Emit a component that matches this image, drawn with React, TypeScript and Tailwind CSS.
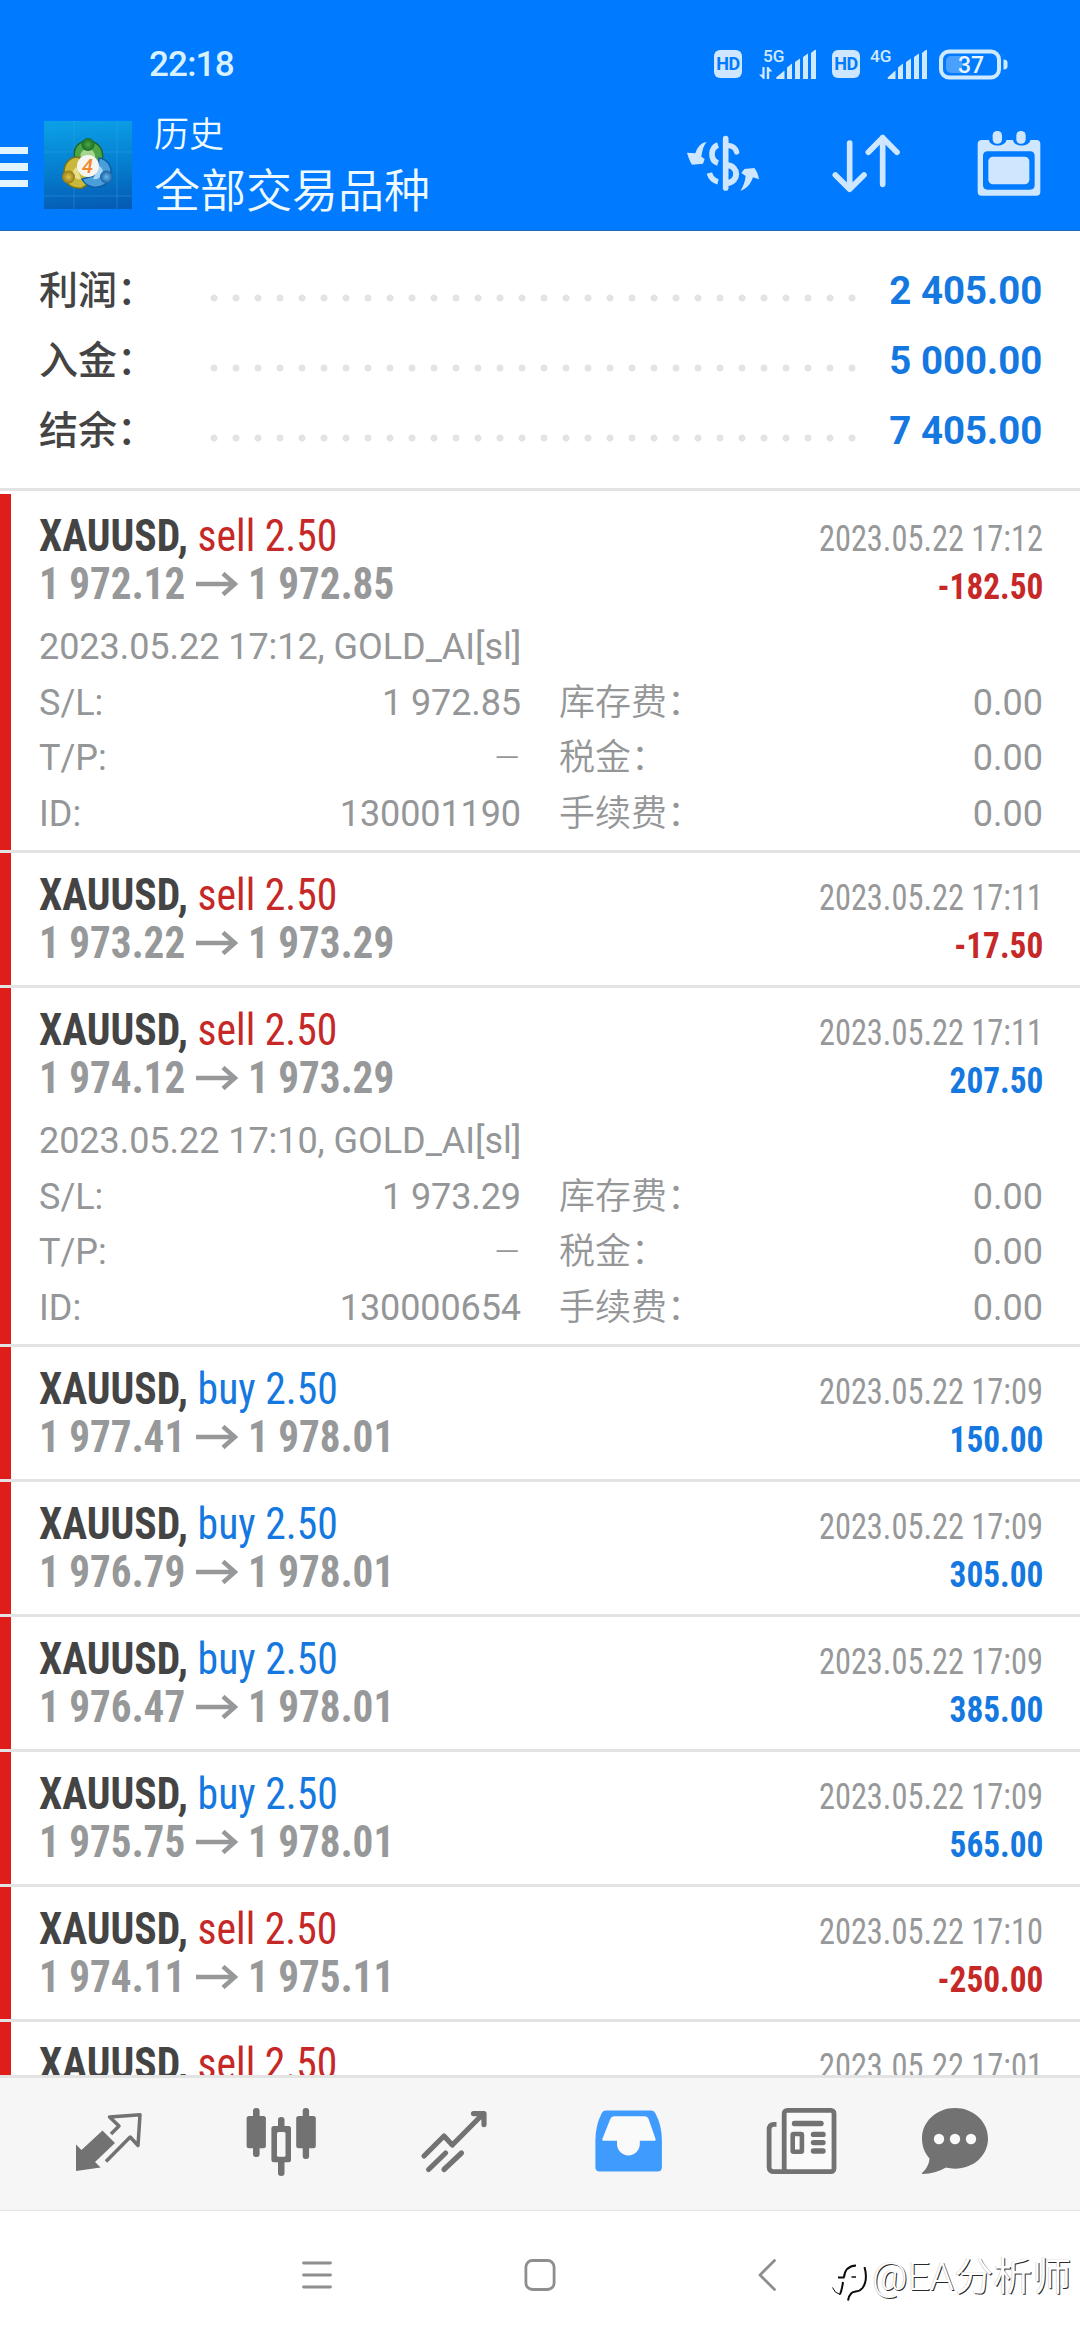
import React from 'react';

type Side = 'buy' | 'sell';

interface Deal {
    side: Side;
    open: string;
    close: string;
    time: string;
    profit: string;
    details?: { comment: string; sl: string; id: string };
}

const summary = [
    { label: '利润：', value: '2 405.00' },
    { label: '入金：', value: '5 000.00' },
    { label: '结余：', value: '7 405.00' },
];

const deals: Deal[] = [
    { side: 'sell', open: '1 972.12', close: '1 972.85', time: '2023.05.22 17:12', profit: '-182.50', details: { comment: '2023.05.22 17:12, GOLD_AI[sl]', sl: '1 972.85', id: '130001190' } },
    { side: 'sell', open: '1 973.22', close: '1 973.29', time: '2023.05.22 17:11', profit: '-17.50' },
    { side: 'sell', open: '1 974.12', close: '1 973.29', time: '2023.05.22 17:11', profit: '207.50', details: { comment: '2023.05.22 17:10, GOLD_AI[sl]', sl: '1 973.29', id: '130000654' } },
    { side: 'buy', open: '1 977.41', close: '1 978.01', time: '2023.05.22 17:09', profit: '150.00' },
    { side: 'buy', open: '1 976.79', close: '1 978.01', time: '2023.05.22 17:09', profit: '305.00' },
    { side: 'buy', open: '1 976.47', close: '1 978.01', time: '2023.05.22 17:09', profit: '385.00' },
    { side: 'buy', open: '1 975.75', close: '1 978.01', time: '2023.05.22 17:09', profit: '565.00' },
    { side: 'sell', open: '1 974.11', close: '1 975.11', time: '2023.05.22 17:10', profit: '-250.00' },
    { side: 'sell', open: '', close: '', time: '2023.05.22 17:01', profit: '' },
];

const HdBadge: React.FC = () => (
    <div className="w-7 h-7 rounded-[6px] bg-[#cfe6ff] text-[#007aff] text-[18px] leading-7 font-bold text-center tracking-[-0.5px]">HD</div>
);

const Signal: React.FC<{ label: string; data?: boolean }> = ({ label, data }) => (
    <svg className="w-[58px] h-8 overflow-visible" viewBox="0 0 58 32" fill="#cfe9ff">
        <text x={data ? 5 : 0} y="13.5" fontSize="17" fontWeight="500" textLength="21.5" lengthAdjust="spacingAndGlyphs">{label}</text>
        {data && <path d="M4.4 19h2.2v12H5.4L1 26.5h3.4zM8.8 31V19h1.6l4 4.500h-3.200V31z" />}
        <path d={data ? 'M26.5 31H19a1 1 0 0 1-.6-1.7l8.1-6.8z' : 'M25.5 31h-7a1 1 0 0 1-.6-1.7l7.6-6.8z'} />
        <g transform={data ? 'translate(0 0)' : 'translate(-1 0)'}>
            <path d="M29 31V19.500l5-4V31zM37 31V14l5-3.500V31zM45 31V9l5-3.500V31zM53 31V5l3-2.500q2-1.500 2 .5v28z" />
        </g>
    </svg>
);

const Battery: React.FC = () => (
    <svg className="w-[69px] h-[31px]" viewBox="0 0 69 31">
        <rect x="2" y="2.5" width="58" height="26" rx="8" fill="none" stroke="#cfe9ff" strokeWidth="4" />
        <path d="M12 7h11v17H12a5 5 0 0 1-5-5v-7a5 5 0 0 1 5-5z" fill="#4aa0ff" />
        <path d="M64.5 10.5q4 0 4 3v4q0 3-4 3z" fill="#cfe9ff" />
        <text x="32" y="23.5" textAnchor="middle" fontSize="23" fontWeight="500" fill="#eaf6ff">37</text>
    </svg>
);

const AppLogo: React.FC = () => (
    <svg className="w-[88px] h-[88px]" viewBox="0 0 88 88">
        <defs>
            <linearGradient id="tile" x1="0.4" y1="0" x2="0.5" y2="1">
                <stop offset="0" stopColor="#0b9fe6" />
                <stop offset="0.5" stopColor="#0580d0" />
                <stop offset="1" stopColor="#055cb4" />
            </linearGradient>
            <radialGradient id="green"><stop offset="0" stopColor="#4fa83c" /><stop offset="1" stopColor="#176b2c" /></radialGradient>
            <radialGradient id="gold"><stop offset="0" stopColor="#dcc44c" /><stop offset="1" stopColor="#967a14" /></radialGradient>
            <radialGradient id="sky"><stop offset="0" stopColor="#6ab8ea" /><stop offset="1" stopColor="#165fa6" /></radialGradient>
        </defs>
        <rect width="88" height="88" fill="url(#tile)" />
        <path d="M0 31h88M0 75h88M30 0v88M73 0v88" stroke="#3aa6ea" strokeWidth="1" opacity="0.4" />
        <path d="M31 38c-3-10 3-18 13-18s17 9 14 20l-5 8-18-8z" fill="#4fa545" stroke="#17692f" strokeWidth="1.5" />
        <path d="M37 37c-2-5 2-9 7-9s8 5 7 10z" fill="#a9d68f" />
        <path d="M34 36c-9 0-14 7-14 16 0 11 8 16 18 15l10-6-10-22z" fill="#c9b93a" stroke="#7a7218" strokeWidth="1.5" />
        <path d="M33 46c-3 1-5 5-4 8s4 5 8 4z" fill="#e8df8c" />
        <path d="M55 37c8 1 13 8 12 16-1 10-10 14-18 13-5-1-9-4-11-8l15-4z" fill="#4a9fda" stroke="#0f5da3" strokeWidth="1.5" />
        <path d="M55 45c3 1 5 5 3 8-2 4-5 6-9 5z" fill="#a9d6f3" />
        <circle cx="44" cy="23.5" r="6.5" fill="url(#green)" />
        <circle cx="24.5" cy="56" r="6.5" fill="url(#gold)" />
        <circle cx="62.5" cy="56" r="6.5" fill="url(#sky)" />
        <circle cx="44" cy="45" r="11" fill="#f7f5f2" />
        <text x="43.5" y="52" textAnchor="middle" fontSize="20" fontWeight="500" fontStyle="italic" fill="#f0892c">4</text>
    </svg>
);

const CurrencyIcon: React.FC = () => (
    <svg className="w-[76px] h-[60px]" viewBox="0 0 228 180" fill="none" stroke="#cfe6ff" strokeWidth="17" strokeLinecap="round">
        <path d="M122 17v148" />
        <path d="M128 37c14 1 24 9 27 20" strokeWidth="16" />
        <path d="M128 97c34 4 34 48 0 53" strokeWidth="18" />
        <path d="M99 36c-23 8-25 46 0 54" strokeWidth="17" strokeLinecap="butt" />
        <path d="M99 146c-14-3-22-13-26-26" strokeWidth="17" strokeLinecap="butt" />
        <path d="M65 27C49 29 39 39 31 61L6 59c4 12 7 24 15 36l33-3 5-14-10-7c3-20 7-34 16-44z" fill="#cfe6ff" stroke="none" />
        <path d="M166 173c17-3 30-18 38-40l18 6c-2-13-6-24-14-34l-30 3-9 12 13 9c-2 18-7 32-16 44z" fill="#cfe6ff" stroke="none" />
    </svg>
);

const SortIcon: React.FC = () => (
    <svg className="w-[70px] h-[62px]" viewBox="0 0 210 186" fill="none" stroke="#cfe6ff" strokeWidth="17" strokeLinecap="round" strokeLinejoin="round">
        <path d="M56 33v138M13 129l43 43 43-43M155 157V17M112 61l43-44 43 44" />
    </svg>
);

const CalendarIcon: React.FC = () => (
    <svg className="w-[66px] h-[68px]" viewBox="0 0 198 204" fill="#cfe6ff">
        <path fillRule="evenodd" d="M18 33h21c2 22 50 22 52 0h20c2 22 50 22 52 0h18q12 0 12 12v143q0 12-12 12H17q-12 0-12-12V45q0-12 13-12zM35 67q-14 0-14 14v87q0 14 14 14h127q14 0 14-14V81q0-14-14-14z" />
        <rect x="50" y="6" width="28" height="38" rx="13" />
        <rect x="121" y="6" width="28" height="38" rx="13" />
        <rect x="37" y="83" width="123" height="83" rx="14" />
    </svg>
);

const DealRow: React.FC<{ deal: Deal; first?: boolean }> = ({ deal, first }) => {
    const { side, open, close, time, profit, details } = deal;
    const isLoss = profit.startsWith('-');
    return (
        <div className={`shrink-0 border-b-[3px] border-[#e3e3e3] ${first ? 'pt-[3px]' : ''}`}>
            <div className={`border-l-[11px] border-[#df1e1c] pl-[28px] pr-[37px] pt-[18px] ${details ? 'h-[356px]' : 'h-[132px]'}`}>
                <div className="flex items-baseline justify-between h-12 leading-[48px] font-stretch-condensed">
                    <p className="text-[44px] whitespace-pre text-[#444444] origin-left scale-x-[0.946]">
                        <span className="font-bold">XAUUSD, </span>
                        <span className={side === 'buy' ? 'text-[#1478e0]' : 'text-[#c62828]'}>{side} 2.50</span>
                    </p>
                    <p className="text-[36px] text-[#969899] whitespace-nowrap origin-right scale-x-[0.9]">{time}</p>
                </div>
                <div className="flex items-baseline justify-between h-12 leading-[48px] font-bold font-stretch-condensed">
                    <p className="flex items-baseline text-[44px] text-[#969899] whitespace-nowrap">
                        <span className="w-[157px]">
                            <span className="inline-block origin-left scale-x-[0.935]">{open}</span>
                        </span>
                        <svg className="w-[42px] h-6 mr-[10px] translate-y-[-3px]" viewBox="0 0 42 24" fill="none" stroke="#969899" strokeWidth="4.5">
                            <path d="M0 12h40M27 1.5L39 12 27 22.5" />
                        </svg>
                        <span className="inline-block origin-left scale-x-[0.935]">{close}</span>
                    </p>
                    <p className={`text-[36px] origin-right scale-x-[0.925] ${isLoss ? 'text-[#c62828]' : 'text-[#1478e0]'}`}>{profit}</p>
                </div>
                {details && (
                    <div className="mt-[11px] text-[36px] leading-[56.5px] font-[380] text-[#949697]">
                        <p className="whitespace-nowrap tracking-[-0.05px]">{details.comment}</p>
                        <div className="flex justify-between">
                            <dl className="grid grid-cols-[auto_1fr] w-[482px] leading-[55.5px]">
                                <dt>S/L:</dt>
                                <dd className="text-right tracking-[-0.1px]">{details.sl}</dd>
                                <dt>T/P:</dt>
                                <dd className="text-right font-light"><span className="inline-block origin-right scale-x-[1.2]">–</span></dd>
                                <dt>ID:</dt>
                                <dd className="text-right tracking-[-0.1px]">{details.id}</dd>
                            </dl>
                            <dl className="grid grid-cols-[auto_1fr] w-[484px] leading-[55.5px]">
                                <dt className="font-[350]">库存费：</dt>
                                <dd className="text-right">0.00</dd>
                                <dt className="font-[350]">税金：</dt>
                                <dd className="text-right">0.00</dd>
                                <dt className="font-[350]">手续费：</dt>
                                <dd className="text-right">0.00</dd>
                            </dl>
                        </div>
                    </div>
                )}
            </div>
        </div>
    );
};

const TabBar: React.FC = () => (
    <nav className="h-[136px] shrink-0 border-t-[3px] border-b border-[#e3e3e3] bg-[#f6f6f6] flex items-start pt-[28px] text-[#727272]">
        <svg className="w-[74px] h-[70px] ml-[70px]" viewBox="0 0 74 70" fill="none" stroke="currentColor" strokeWidth="3.5" strokeLinejoin="round">
            <path d="M41 28l8-8-9.500-9L70 8.700 68 39.500 60.200 31 36 55.500" />
            <path d="M32.500 24.500L45 37 25 56l5.600 5.500L6 65V38.500l5.500 5.500z" fill="currentColor" stroke="none" />
        </svg>
        <svg className="w-[74px] h-[70px] ml-[100px]" viewBox="0 0 74 70" fill="currentColor">
            <rect x="9" y="2" width="6.6" height="49" rx="3" />
            <rect x="2.6" y="10" width="19.3" height="32.3" rx="2.5" />
            <rect x="58.7" y="2" width="6.4" height="51" rx="3" />
            <rect x="52.2" y="10" width="19.6" height="32.3" rx="2.5" />
            <rect x="34" y="11" width="6.5" height="59" rx="3" />
            <rect x="27.4" y="20" width="19.6" height="36.3" rx="2.5" />
            <rect x="33" y="26" width="8.5" height="24.7" rx="1.5" fill="#f6f6f6" />
        </svg>
        <svg className="w-[70px] h-[70px] ml-[102px]" viewBox="0 -2 70 70" fill="none" stroke="currentColor" strokeWidth="5.2" strokeLinecap="round" strokeLinejoin="round">
            <path d="M4 48l20-20 8.300 9L63 6M53.500 5.600H64v11M25.600 45L8.600 61.500M41.500 45L24 61.500" />
        </svg>
        <svg className="w-[70px] h-[70px] ml-[103px]" viewBox="0 0 70 70">
            <path d="M13 4.400h45q3 0 4.500 3 6.400 12 6.400 27v26.500q0 4.500-4.500 4.500H7q-4.600 0-4.600-4.500V34.500q0-15 6.200-27 1.400-3.100 4.400-3.100z" fill="#3f9bfe" />
            <path d="M21 10.300h31q2.500 0 3.500 2.500l7 20q.7 2-1.500 2H46.800V38a11.400 11.400 0 0 1-22.800 0v-3.200H11q-2.300 0-1.600-2l8-20q1-2.500 3.600-2.500z" fill="#fafafa" />
        </svg>
        <svg className="w-[74px] h-[70px] ml-[102px]" viewBox="0 0 74 70" fill="none" stroke="currentColor">
            <rect x="19.2" y="4.4" width="49.8" height="61.2" rx="3" strokeWidth="4.8" fill="#fafafa" />
            <path d="M11.500 18.400H9Q4.100 18.400 4.100 24v36.700q0 5 5 5h12.400" strokeWidth="4.8" />
            <path d="M29.500 17.500H56M48.500 28.400H58M48.500 36.600H58M48.500 45H58" strokeWidth="5.4" strokeLinecap="round" />
            <rect x="27.7" y="28" width="9.2" height="17.8" rx="1" strokeWidth="4.6" />
        </svg>
        <svg className="w-[70px] h-[70px] ml-[81px]" viewBox="0 0 70 70">
            <path d="M35 2c18.500 0 33 13.500 33 30.500S53.500 62.700 35 62.700c-3.500 0-6-.5-9-1.200C19 65.500 11 67.800 2.500 68c-.8 0-.8-.7-.3-1.200C7 62.500 9 58 9.500 52.500 4.500 47 2 40 2 32.500 2 15.500 16.500 2 35 2z" fill="currentColor" />
            <g fill="#fafafa">
                <circle cx="19" cy="33" r="5.2" />
                <circle cx="35" cy="33" r="5.2" />
                <circle cx="51" cy="33" r="5.2" />
            </g>
        </svg>
    </nav>
);

const SystemNav: React.FC = () => (
    <div className="h-[129px] shrink-0 bg-white flex items-start pt-12">
        <svg className="w-[30px] h-8 ml-[302px]" viewBox="0 0 30 32" stroke="#8e8e8e" strokeWidth="2.8" strokeLinecap="round">
            <path d="M1.500 4h27M1.500 16h27M1.500 28h27" />
        </svg>
        <svg className="w-8 h-8 ml-[192px]" viewBox="0 0 32 32" fill="none" stroke="#8e8e8e" strokeWidth="2.8">
            <rect x="1.9" y="1.5" width="28.2" height="29" rx="6.5" />
        </svg>
        <svg className="w-5 h-8 ml-[202px]" viewBox="0 0 20 32" fill="none" stroke="#8e8e8e" strokeWidth="2.8" strokeLinecap="round" strokeLinejoin="round">
            <path d="M16.500 1.500L2 16l14.500 14.500" />
        </svg>
        <svg className="w-[38px] h-[42px] mt-[3px] ml-[53px]" viewBox="0 0 38 42" fill="none" stroke="#0c0c0c">
            <path d="M1.500 25.500q2 5.500 7.500 7" strokeWidth="1" />
            <path d="M9 32.500q2-5 3-12.500M7 15.500h6.500M13 15.500c.5-7 4-11.500 12-12" strokeWidth="2" />
            <path d="M20.500 15h4.500" strokeWidth="1.5" />
            <path d="M33.500 5c2.500 9 1.500 16-2 21-4 5-8 2.500-11 5-2 2-3 4-3.500 7.500" strokeWidth="2" />
        </svg>
        <p className="ml-[3px] -mt-[3px] text-[39px] leading-[42px] whitespace-nowrap text-white font-[350] [text-shadow:1px_1px_0_#2a2a2a,-0.5px_-0.5px_0_#c8c8c8]">@EA分析师</p>
    </div>
);

export default function App() {
    return (
        <div className='w-[1080px] h-[2340px] flex flex-col overflow-hidden bg-white font-["Roboto","Noto_Sans_CJK_SC",sans-serif]'>
            <header className="h-[231px] shrink-0 bg-[#007aff] border-b border-[#1f6fb8]">
                <div className="h-[100px] pt-7 pl-[149px] pr-[72px] flex items-center">
                    <span className="pt-[3px] text-[35px] font-medium tracking-[-0.8px] text-[#d8f1ff]">22:18</span>
                    <div className="ml-auto flex items-center">
                        <HdBadge />
                        <div className="ml-4 mr-4 flex"><Signal label="5G" data /></div>
                        <HdBadge />
                        <div className="ml-[10px] mr-[11px] flex"><Signal label="4G" /></div>
                        <Battery />
                    </div>
                </div>
                <div className="h-[130px] flex items-center pr-[38px]">
                    <div className="flex flex-col gap-[9px] w-7 pt-1">
                        <span className="h-[7.5px] bg-[#e2f5ff]" />
                        <span className="h-[7.5px] bg-[#e2f5ff]" />
                        <span className="h-[7.5px] bg-[#e2f5ff]" />
                    </div>
                    <div className="ml-4"><AppLogo /></div>
                    <div className="ml-[22px] -mt-[2px] font-[350] text-[#eefaff]">
                        <p className="text-[35px] leading-[54px]">历史</p>
                        <p className="text-[46px] leading-[56px]">全部交易品种</p>
                    </div>
                    <div className="ml-auto flex items-center pb-1">
                        <CurrencyIcon />
                        <div className="ml-[70px] mr-[75px]"><SortIcon /></div>
                        <CalendarIcon />
                    </div>
                </div>
            </header>

            <section className="h-[260px] shrink-0 border-b-[3px] border-[#e3e3e3] pt-[25px] pl-[39px] pr-[38px]">
                {summary.map(row => (
                    <div key={row.label} className="h-[70px] flex items-center text-[39px] leading-[70px]">
                        <span className="w-[164px] font-medium text-[#444444]">{row.label}</span>
                        <span className="w-[660px] h-[22px] mt-[13px] bg-[radial-gradient(circle,#e3e3e3_3px,transparent_4px)] bg-[length:22px_22px]" />
                        <span className="ml-auto font-bold text-[#1478e0] whitespace-nowrap origin-right scale-x-[0.985]">{row.value}</span>
                    </div>
                ))}
            </section>

            <main className="flex-1 min-h-0 overflow-hidden flex flex-col">
                {deals.map((deal, i) => <DealRow key={i} deal={deal} first={i === 0} />)}
            </main>

            <TabBar />
            <SystemNav />
        </div>
    );
}
